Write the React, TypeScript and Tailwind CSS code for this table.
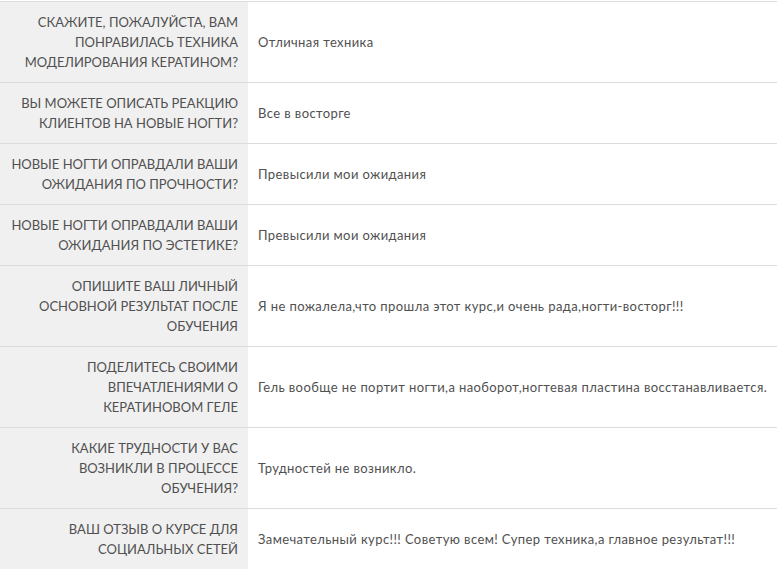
const rows: { q: string[]; a: string }[] = [
  { q: ['СКАЖИТЕ, ПОЖАЛУЙСТА, ВАМ', 'ПОНРАВИЛАСЬ ТЕХНИКА', 'МОДЕЛИРОВАНИЯ КЕРАТИНОМ?'], a: 'Отличная техника' },
  { q: ['ВЫ МОЖЕТЕ ОПИСАТЬ РЕАКЦИЮ', 'КЛИЕНТОВ НА НОВЫЕ НОГТИ?'], a: 'Все в восторге' },
  { q: ['НОВЫЕ НОГТИ ОПРАВДАЛИ ВАШИ', 'ОЖИДАНИЯ ПО ПРОЧНОСТИ?'], a: 'Превысили мои ожидания' },
  { q: ['НОВЫЕ НОГТИ ОПРАВДАЛИ ВАШИ', 'ОЖИДАНИЯ ПО ЭСТЕТИКЕ?'], a: 'Превысили мои ожидания' },
  { q: ['ОПИШИТЕ ВАШ ЛИЧНЫЙ', 'ОСНОВНОЙ РЕЗУЛЬТАТ ПОСЛЕ', 'ОБУЧЕНИЯ'], a: 'Я не пожалела,что прошла этот курс,и очень рада,ногти-восторг!!!' },
  { q: ['ПОДЕЛИТЕСЬ СВОИМИ', 'ВПЕЧАТЛЕНИЯМИ О', 'КЕРАТИНОВОМ ГЕЛЕ'], a: 'Гель вообще не портит ногти,а наоборот,ногтевая пластина восстанавливается.' },
  { q: ['КАКИЕ ТРУДНОСТИ У ВАС', 'ВОЗНИКЛИ В ПРОЦЕССЕ', 'ОБУЧЕНИЯ?'], a: 'Трудностей не возникло.' },
  { q: ['ВАШ ОТЗЫВ О КУРСЕ ДЛЯ', 'СОЦИАЛЬНЫХ СЕТЕЙ'], a: 'Замечательный курс!!! Советую всем! Супер техника,а главное результат!!!' },
];

export default function App() {
  return (
    <div className="w-[777px] h-[569px] overflow-hidden bg-white pt-[1px] font-['Lato','Liberation_Sans',sans-serif] text-[13px] leading-[20px] text-[#505050]">
      <div className="border-t border-[#dcdcdc]">
        {rows.map((r, i) => (
          <div key={i} className="flex border-b border-[#dcdcdc]">
            <div className="w-[248px] shrink-0 bg-[#f0f0f0] py-[10px] pr-[10px] text-right">
              {r.q.map((l, j) => (
                <div key={j}>{l}</div>
              ))}
            </div>
            <div className="flex items-center pl-[10px] tracking-[0.4px]">{r.a}</div>
          </div>
        ))}
      </div>
    </div>
  );
}
